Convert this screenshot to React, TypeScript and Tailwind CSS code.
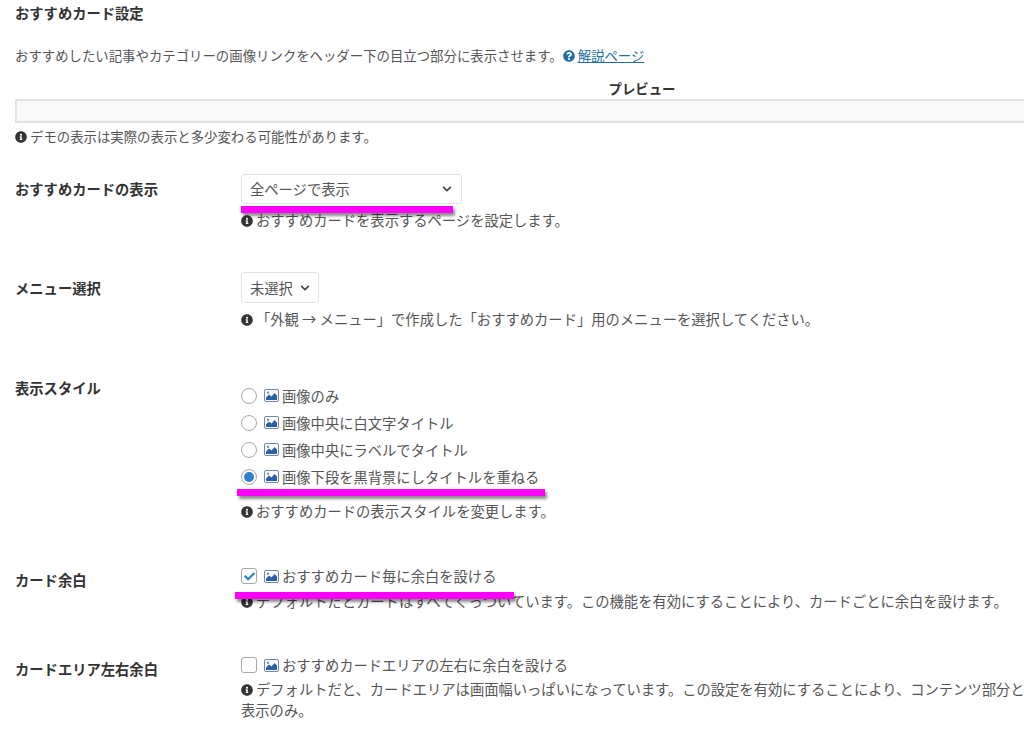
import { FaInfoCircle, FaQuestionCircle, FaChevronDown, FaCheck } from 'react-icons/fa';

function PicIcon() {
  return (
    <svg width="15" height="13" viewBox="0 0 15 13" className="mr-[3px] shrink-0">
      <rect x="0.5" y="0.5" width="14" height="12" rx="1.5" fill="#fff" stroke="#6d87ad" />
      <path d="M2 11V8.5L5 5.5L7.5 7.5L10.5 4L13 6.5V11Z" fill="#2c5fa8" />
      <circle cx="4" cy="3.8" r="1.2" fill="#6d95c8" />
    </svg>
  );
}

function Note({ children, className = '' }: { children: React.ReactNode; className?: string }) {
  return (
    <p className={`text-[14.3px] leading-[21px] text-[#555] ${className}`}>
      <FaInfoCircle className="mr-[3px] inline-block size-[12px] -translate-y-px text-[#333]" />
      {children}
    </p>
  );
}

function Radio({ label, checked = false }: { label: string; checked?: boolean }) {
  return (
    <div className="flex h-[27px] items-center text-[14.3px] text-[#555]">
      <span className="mr-[7px] flex size-[16px] items-center justify-center rounded-full border border-[#a8a8a8] bg-white">
        {checked ? <span className="size-[10px] rounded-full bg-[#2f7fd0]" /> : null}
      </span>
      <PicIcon />
      <span>{label}</span>
    </div>
  );
}

function Check({ label, checked = false }: { label: string; checked?: boolean }) {
  return (
    <div className="flex h-[22px] items-center text-[14.3px] text-[#555]">
      <span className="mr-[7px] flex size-[16px] items-center justify-center rounded-[3px] border border-[#a8a8a8] bg-white">
        {checked ? <FaCheck className="size-[11px] text-[#2f7fd0]" /> : null}
      </span>
      <PicIcon />
      <span>{label}</span>
    </div>
  );
}

function Marker({ className }: { className: string }) {
  return <div className={`absolute h-[7px] bg-[#ff00ff] shadow-[2px_3px_3px_rgba(0,0,0,0.45)] ${className}`} />;
}

function Row({ label, labelClass, children, className = '' }: { label: string; labelClass: string; children: React.ReactNode; className?: string }) {
  return (
    <div className={`flex ${className}`}>
      <div className={`w-[226px] shrink-0 text-[14.3px] leading-[21px] font-bold text-[#333] ${labelClass}`}>{label}</div>
      <div className="min-w-0 flex-1">{children}</div>
    </div>
  );
}

export default function App() {
  return (
    <div
      className="relative h-[749px] w-[1024px] overflow-hidden bg-white pt-[2px] pl-[15px]"
      style={{ fontFamily: '"Noto Sans CJK JP", "Noto Sans", sans-serif' }}
    >
      <h2 className="text-[14.3px] leading-[21px] font-bold text-[#333]">おすすめカード設定</h2>

      <p className="mt-[22px] whitespace-nowrap text-[13.4px] leading-[21px] text-[#555]">
        おすすめしたい記事やカテゴリーの画像リンクをヘッダー下の目立つ部分に表示させます。
        <FaQuestionCircle className="mr-[3px] inline-block size-[12px] -translate-y-px text-[#1d6fa5]" />
        <a className="text-[#1d6fa5] underline">解説ページ</a>
      </p>

      <div className="mt-[12px] w-[1254px] text-center text-[13.4px] leading-[21px] font-bold text-[#333]">プレビュー</div>
      <div className="h-[24px] w-[1254px] border-2 border-[#e2e2e2] bg-[#f9f9fa]" />
      <p className="mt-[3px] text-[13.4px] leading-[21px] whitespace-nowrap text-[#555]">
        <FaInfoCircle className="mr-[3px] inline-block size-[12px] -translate-y-px text-[#333]" />
        デモの表示は実際の表示と多少変わる可能性があります。
      </p>

      <Row label="おすすめカードの表示" labelClass="mt-[4px]" className="mt-[27px]">
        <div className="flex h-[30px] w-[221px] items-center justify-between rounded-[3px] border border-[#e3e3e3] bg-white pr-[9px] pl-[8px] text-[14.3px] text-[#555]">
          全ページで表示
          <FaChevronDown className="size-[10px] text-[#444]" />
        </div>
        <Note className="mt-[5px] whitespace-nowrap">おすすめカードを表示するページを設定します。</Note>
      </Row>

      <Row label="メニュー選択" labelClass="mt-[5px]" className="mt-[42px]">
        <div className="flex h-[31px] w-[78px] items-center justify-between rounded-[3px] border border-[#e3e3e3] bg-white pr-[8px] pl-[8px] text-[14.3px] text-[#555]">
          未選択
          <FaChevronDown className="size-[10px] text-[#444]" />
        </div>
        <Note className="mt-[5px] whitespace-nowrap">「外観 → メニュー」で作成した「おすすめカード」用のメニューを選択してください。</Note>
      </Row>

      <Row label="表示スタイル" labelClass="mt-[1px]" className="mt-[47px]">
        <div className="mt-[6px]">
          <Radio label="画像のみ" />
          <Radio label="画像中央に白文字タイトル" />
          <Radio label="画像中央にラベルでタイトル" />
          <Radio label="画像下段を黒背景にしタイトルを重ねる" checked />
        </div>
        <Note className="mt-[10px] whitespace-nowrap">おすすめカードの表示スタイルを変更します。</Note>
      </Row>

      <Row label="カード余白" labelClass="mt-[4px]" className="mt-[44px]">
        <Check label="おすすめカード毎に余白を設ける" checked />
        <Note className="mt-[3px] whitespace-nowrap">デフォルトだとカードはすべてくっついています。この機能を有効にすることにより、カードごとに余白を設けます。</Note>
      </Row>

      <Row label="カードエリア左右余白" labelClass="mt-[4px]" className="mt-[43px]">
        <Check label="おすすめカードエリアの左右に余白を設ける" />
        <Note className="mt-[2px] w-[1000px]">
          デフォルトだと、カードエリアは画面幅いっぱいになっています。この設定を有効にすることにより、コンテンツ部分と同じ幅になります。
          <br />
          表示のみ。
        </Note>
      </Row>

      <Marker className="top-[206px] left-[241px] w-[212px]" />
      <Marker className="top-[489px] left-[237px] w-[308px]" />
      <Marker className="top-[592px] left-[235px] w-[279px]" />
    </div>
  );
}
